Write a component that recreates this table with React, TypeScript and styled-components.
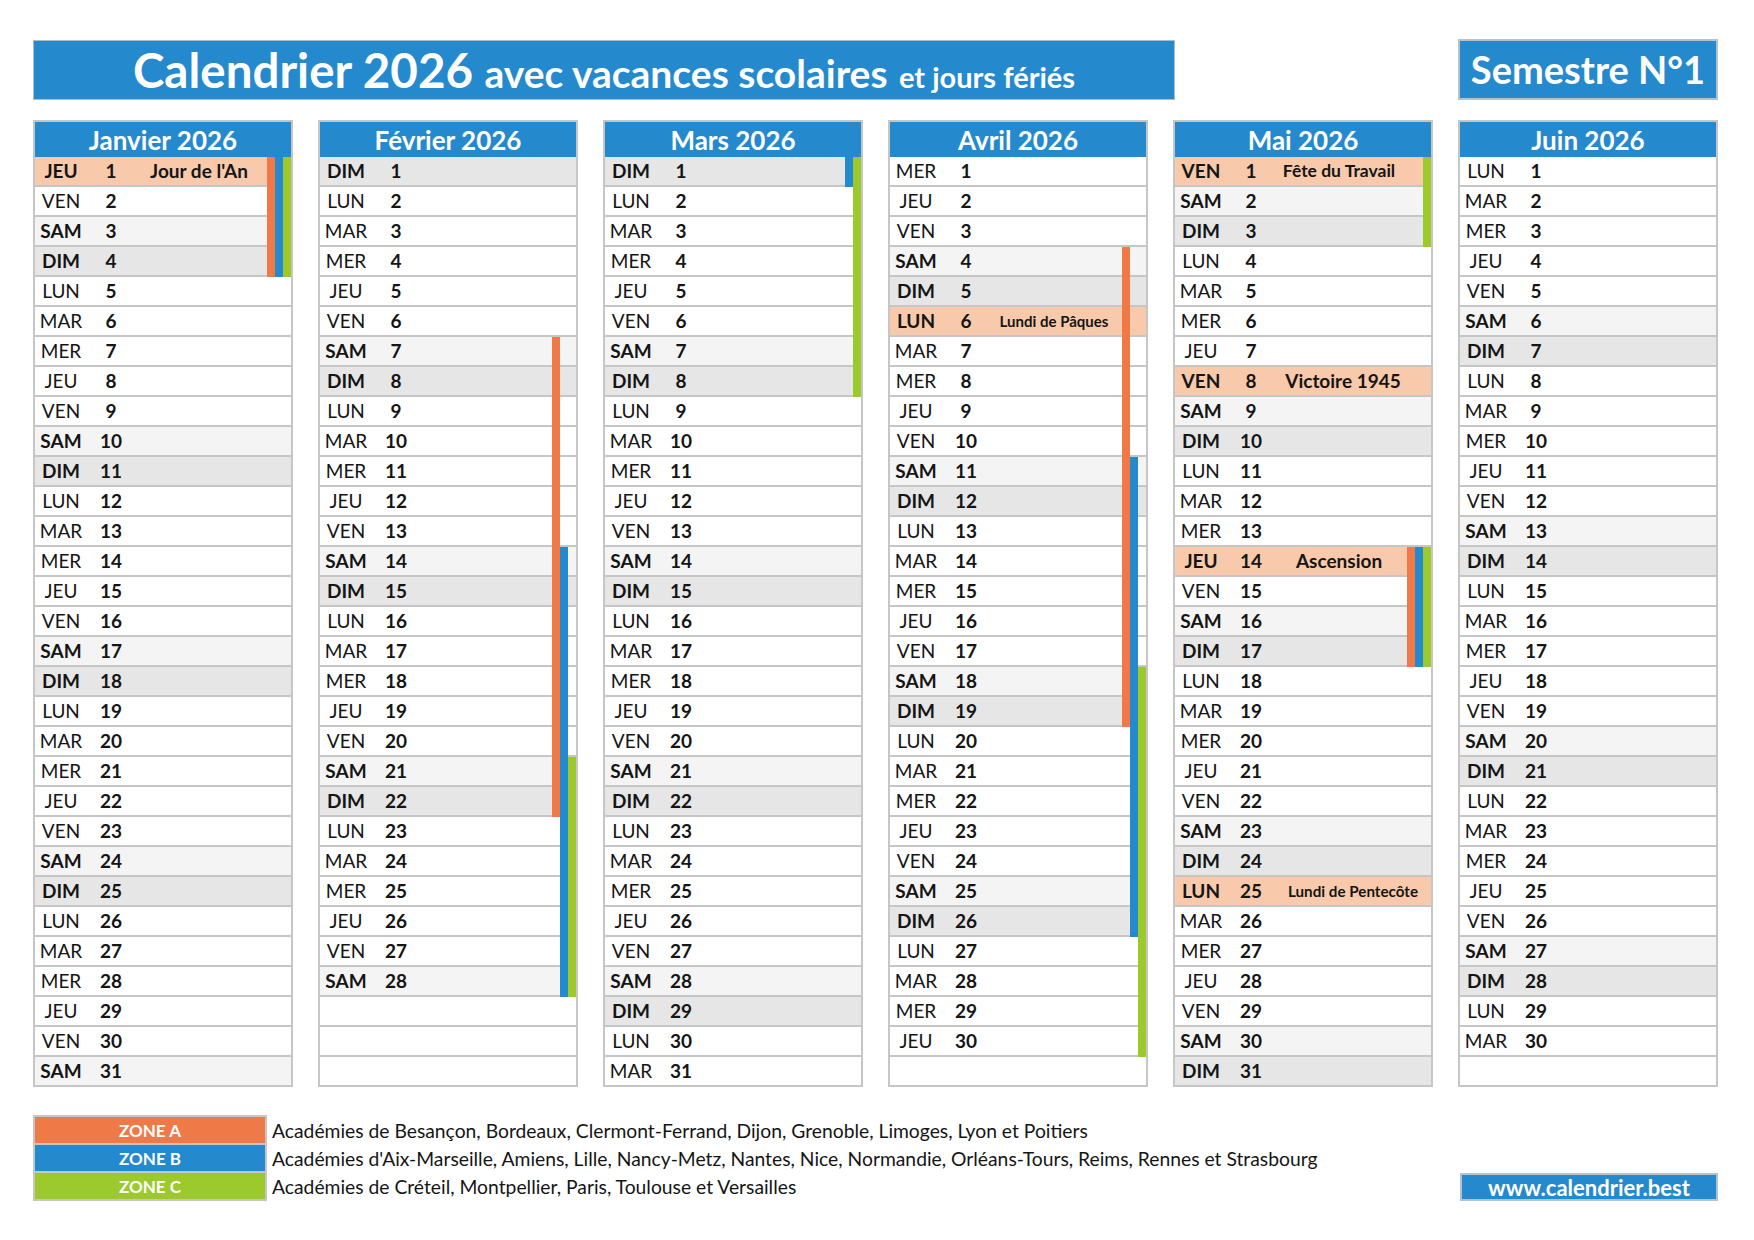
import React from "react";
import styled, { createGlobalStyle } from "styled-components";

const BLUE = "#2589cd";
const ORANGE = "#ef7a47";
const GREEN = "#9cc92c";
const PEACH = "#f8caab";
const SAT = "#f4f4f4";
const SUN = "#e6e6e6";
const LINE = "#c6c6c6";
const INK = "#151515";

const GlobalStyle = createGlobalStyle`
  html, body { margin: 0; padding: 0; background: #ffffff; }
  body { font-family: Lato, "Noto Sans", "DejaVu Sans", sans-serif; color: ${INK}; }
`;

const Page = styled.div`
  width: 1685px;
  padding: 39px 0 0 33px;
`;

const TopRow = styled.div`
  display: flex;
  justify-content: space-between;
  align-items: flex-end;
`;

const TitleBar = styled.div`
  width: 1140px;
  height: 58px;
  background: ${BLUE};
  border: 1px solid #a9bfd0;
  color: #fff;
  font-weight: 700;
  font-size: 47px;
  line-height: 58px;
  text-align: center;
  white-space: nowrap;
`;

const TitlePart = styled.span<{ $size: number }>`
  font-size: ${(p) => p.$size}px;
`;

const SemesterBox = styled.div`
  width: 256px;
  height: 57px;
  background: ${BLUE};
  border: 2px solid #b4c2cd;
  color: #fff;
  font-weight: 700;
  font-size: 38px;
  line-height: 57px;
  text-align: center;
  white-space: nowrap;
`;

const MonthsGrid = styled.div`
  display: grid;
  grid-template-columns: repeat(6, 260px);
  column-gap: 25px;
  margin-top: 20px;
`;

const MonthColumn = styled.div`
  position: relative;
  border: 2px solid ${LINE};
  border-bottom: none;
  background: #fff;
`;

const MonthHeader = styled.div`
  height: 35px;
  background: ${BLUE};
  color: #fff;
  font-weight: 700;
  font-size: 26px;
  display: flex;
  align-items: center;
  justify-content: center;
`;

const DayRow = styled.div<{ $bg: string }>`
  display: grid;
  grid-template-columns: 52px 48px 1fr;
  align-items: center;
  height: 28px;
  border-bottom: 2px solid ${LINE};
  background: ${(p) => p.$bg};
  font-size: 19px;
  line-height: 28px;
  white-space: nowrap;
`;

const DayName = styled.span<{ $bold: boolean }>`
  text-align: center;
  font-weight: ${(p) => (p.$bold ? 700 : 400)};
`;

const DayNum = styled.span`
  text-align: center;
  font-weight: 700;
`;

const HolidayLabel = styled.span<{ $size: number; $pr: number }>`
  text-align: center;
  font-weight: 700;
  font-size: ${(p) => p.$size}px;
  padding-right: ${(p) => p.$pr}px;
  overflow: visible;
`;

const VacationBar = styled.div<{ $color: string; $slot: number }>`
  position: absolute;
  right: ${(p) => p.$slot * 8}px;
  width: 8px;
  background: ${(p) => p.$color};
`;

const Footer = styled.div`
  display: flex;
  justify-content: space-between;
  align-items: flex-end;
  margin-top: 28px;
`;

const Legend = styled.div`
  display: flex;
  align-items: flex-start;
`;

const SwatchStack = styled.div`
  width: 230px;
  display: grid;
  grid-auto-rows: 26px;
  row-gap: 2px;
  background: ${LINE};
  border: 2px solid ${LINE};
`;

const Swatch = styled.div<{ $color: string }>`
  background: ${(p) => p.$color};
  color: #fff;
  font-weight: 700;
  font-size: 17px;
  display: flex;
  align-items: center;
  justify-content: center;
`;

const LegendTexts = styled.div`
  display: grid;
  grid-auto-rows: 26px;
  row-gap: 2px;
  padding: 2px 0 0 5px;
`;

const LegendText = styled.div`
  font-size: 19.3px;
  display: flex;
  align-items: center;
  white-space: nowrap;
`;

const SiteBox = styled.div`
  width: 254px;
  height: 24px;
  background: ${BLUE};
  border: 2px solid #b4c2cd;
  color: #fff;
  font-weight: 700;
  font-size: 22px;
  display: flex;
  align-items: center;
  justify-content: center;
`;

const DAY_NAMES = ["LUN", "MAR", "MER", "JEU", "VEN", "SAM", "DIM"];

type Bar = { zone: "A" | "B" | "C"; from: number; to: number };
type Holiday = { label: string; size: number; pr: number };

type Month = {
  name: string;
  days: number;
  first: number;
  bars: Bar[];
  holidays: Record<number, Holiday>;
};

const MONTHS: Month[] = [
  {
    name: "Janvier 2026",
    days: 31,
    first: 3,
    bars: [
      { zone: "A", from: 1, to: 4 },
      { zone: "B", from: 1, to: 4 },
      { zone: "C", from: 1, to: 4 },
    ],
    holidays: { 1: { label: "Jour de l'An", size: 19, pr: 28 } },
  },
  {
    name: "Février 2026",
    days: 28,
    first: 6,
    bars: [
      { zone: "A", from: 7, to: 22 },
      { zone: "B", from: 14, to: 28 },
      { zone: "C", from: 21, to: 28 },
    ],
    holidays: {},
  },
  {
    name: "Mars 2026",
    days: 31,
    first: 6,
    bars: [
      { zone: "B", from: 1, to: 1 },
      { zone: "C", from: 1, to: 8 },
    ],
    holidays: {},
  },
  {
    name: "Avril 2026",
    days: 30,
    first: 2,
    bars: [
      { zone: "A", from: 4, to: 19 },
      { zone: "B", from: 11, to: 26 },
      { zone: "C", from: 18, to: 30 },
    ],
    holidays: { 6: { label: "Lundi de Pâques", size: 15, pr: 28 } },
  },
  {
    name: "Mai 2026",
    days: 31,
    first: 4,
    bars: [
      { zone: "C", from: 1, to: 3 },
      { zone: "A", from: 14, to: 17 },
      { zone: "B", from: 14, to: 17 },
      { zone: "C", from: 14, to: 17 },
    ],
    holidays: {
      1: { label: "Fête du Travail", size: 17.5, pr: 28 },
      8: { label: "Victoire 1945", size: 19, pr: 20 },
      14: { label: "Ascension", size: 19, pr: 28 },
      25: { label: "Lundi de Pentecôte", size: 15.2, pr: 0 },
    },
  },
  {
    name: "Juin 2026",
    days: 30,
    first: 0,
    bars: [],
    holidays: {},
  },
];

const ZONE_COLOR: Record<string, string> = { A: ORANGE, B: BLUE, C: GREEN };
const ZONE_SLOT: Record<string, number> = { A: 2, B: 1, C: 0 };

const HEADER_H = 35;
const ROW_H = 30;

function MonthView({ month }: { month: Month }) {
  const rows = [];
  for (let d = 1; d <= 31; d++) {
    if (d > month.days) {
      rows.push(<DayRow key={d} $bg="#ffffff" />);
      continue;
    }
    const wd = (month.first + d - 1) % 7;
    const hol = month.holidays[d];
    const bg = hol ? PEACH : wd === 5 ? SAT : wd === 6 ? SUN : "#ffffff";
    rows.push(
      <DayRow key={d} $bg={bg}>
        <DayName $bold={wd >= 5 || !!hol}>{DAY_NAMES[wd]}</DayName>
        <DayNum>{d}</DayNum>
        {hol ? (
          <HolidayLabel $size={hol.size} $pr={hol.pr}>
            {hol.label}
          </HolidayLabel>
        ) : (
          <span />
        )}
      </DayRow>
    );
  }
  return (
    <MonthColumn>
      <MonthHeader>{month.name}</MonthHeader>
      {rows}
      {month.bars.map((b, i) => (
        <VacationBar
          key={i}
          $color={ZONE_COLOR[b.zone]}
          $slot={ZONE_SLOT[b.zone]}
          style={{
            top: HEADER_H + (b.from - 1) * ROW_H,
            height: (b.to - b.from + 1) * ROW_H,
          }}
        />
      ))}
    </MonthColumn>
  );
}

export default function App() {
  return (
    <>
      <GlobalStyle />
      <Page>
        <TopRow>
          <TitleBar>
            <TitlePart $size={47.5}>Calendrier 2026</TitlePart>{" "}
            <TitlePart $size={39}>avec vacances scolaires</TitlePart>{" "}
            <TitlePart $size={29}>et jours fériés</TitlePart>
          </TitleBar>
          <SemesterBox>Semestre N°1</SemesterBox>
        </TopRow>
        <MonthsGrid>
          {MONTHS.map((m) => (
            <MonthView key={m.name} month={m} />
          ))}
        </MonthsGrid>
        <Footer>
          <Legend>
            <SwatchStack>
              <Swatch $color={ORANGE}>ZONE A</Swatch>
              <Swatch $color={BLUE}>ZONE B</Swatch>
              <Swatch $color={GREEN}>ZONE C</Swatch>
            </SwatchStack>
            <LegendTexts>
              <LegendText>
                Académies de Besançon, Bordeaux, Clermont-Ferrand, Dijon, Grenoble, Limoges, Lyon et Poitiers
              </LegendText>
              <LegendText>
                Académies d'Aix-Marseille, Amiens, Lille, Nancy-Metz, Nantes, Nice, Normandie, Orléans-Tours, Reims, Rennes et Strasbourg
              </LegendText>
              <LegendText>
                Académies de Créteil, Montpellier, Paris, Toulouse et Versailles
              </LegendText>
            </LegendTexts>
          </Legend>
          <SiteBox>www.calendrier.best</SiteBox>
        </Footer>
      </Page>
    </>
  );
}
